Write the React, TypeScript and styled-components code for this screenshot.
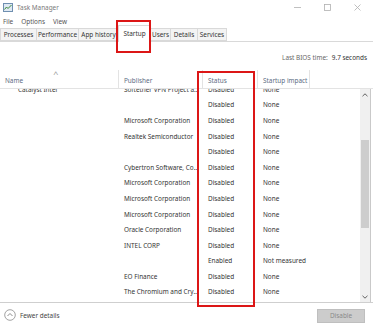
import React from 'react';
import styled, { createGlobalStyle } from 'styled-components';

const GlobalStyle = createGlobalStyle`
  html, body {
    margin: 0;
    padding: 0;
    background: #fff;
  }
  body {
    font-family: 'Noto Sans', 'Liberation Sans', sans-serif;
    color: #333;
  }
`;

//Styled Components

const Window = styled.div`
  position: relative;
  width: 373px;
  height: 327px;
  overflow: hidden;
  display: flex;
  flex-direction: column;
  background: #fff;
  font-size: 6.4px;
`;

const TitleBar = styled.div`
  height: 15px;
  display: flex;
  align-items: center;
  padding: 0 3px;
  gap: 4px;
  color: #7a7a7a;
`;
const Title = styled.span`
  flex: 1;
`;
const WinButton = styled.span`
  width: 26px;
  display: flex;
  justify-content: center;
  align-items: center;
`;

const MenuBar = styled.div`
  height: 12px;
  display: flex;
  align-items: center;
  gap: 8px;
  padding: 0 3px;
  color: #555;
`;

const TabBar = styled.div`
  height: 15px;
  display: flex;
  align-items: flex-end;
  border-bottom: 1px solid #d9d9d9;
  box-sizing: border-box;
`;
const Tab = styled.div<{ $active?: boolean; $w: number }>`
  width: ${(p) => p.$w}px;
  height: ${(p) => (p.$active ? 17 : 13)}px;
  box-sizing: border-box;
  display: flex;
  align-items: ${(p) => (p.$active ? 'flex-start' : 'center')};
  padding-top: ${(p) => (p.$active ? 3 : 0)}px;
  justify-content: center;
  margin-bottom: ${(p) => (p.$active ? -1 : 0)}px;
  background: ${(p) => (p.$active ? '#fff' : '#f3f3f3')};
  border: 1px solid #d9d9d9;
  border-bottom: ${(p) => (p.$active ? 'none' : '1px solid #d9d9d9')};
  margin-right: -1px;
  color: #333;
  white-space: nowrap;
`;

const InfoRow = styled.div`
  height: 28px;
  display: flex;
  justify-content: flex-end;
  align-items: center;
  padding: 3px 6px 0 0;
  box-sizing: border-box;
  color: #666;
  gap: 4px;
`;
const InfoValue = styled.span`
  color: #333;
`;

const Table = styled.div`
  flex: 1;
  display: flex;
  flex-direction: column;
  min-height: 0;
`;

const HeaderRow = styled.div`
  height: 19px;
  display: grid;
  grid-template-columns: 119px 84px 55px 52px 1fr;
  border-bottom: 1px solid #e3e3e3;
  box-sizing: border-box;
`;
const HeaderCell = styled.div<{ $last?: boolean }>`
  position: relative;
  display: flex;
  align-items: center;
  padding: 2px 0 0 ${(p) => (p.$last ? 0 : 5)}px;
  color: #5b6b82;
  white-space: nowrap;
  border-right: ${(p) => (p.$last ? 'none' : '1px solid #e3e3e3')};
`;
const SortCaret = styled.span`
  position: absolute;
  left: 54px;
  top: 0;
  color: #999;
  transform: scaleX(1.4);
`;

const Body = styled.div`
  height: 213px;
  display: flex;
  overflow: hidden;
`;
const Rows = styled.div`
  flex: 1;
  overflow: hidden;
`;
const RowList = styled.div`
  margin-top: -7.4px;
`;
const Row = styled.div`
  height: 15.58px;
  display: grid;
  grid-template-columns: 119px 84px 55px 52px 1fr;
  align-items: center;
  color: #333;
`;
const Cell = styled.div<{ $pad?: number }>`
  padding-left: ${(p) => p.$pad ?? 5}px;
  padding-right: 3px;
  white-space: nowrap;
  overflow: hidden;
  text-overflow: ellipsis;
`;

const ScrollBar = styled.div`
  width: 10px;
  margin-right: 2px;
  background: #f0f0f0;
  border-right: 1px solid #c9c9c9;
  display: flex;
  flex-direction: column;
  align-items: center;
`;
const ScrollArrow = styled.div`
  height: 11px;
  display: flex;
  align-items: center;
  justify-content: center;
`;
const ScrollTrack = styled.div`
  flex: 1;
  width: 100%;
  padding: 40px 0 63px;
  box-sizing: border-box;
  display: flex;
`;
const Thumb = styled.div`
  flex: 1;
  margin: 0 1px;
  background: #cdcdcd;
`;

const Footer = styled.div`
  height: 25px;
  border-top: 1px solid #cfcfcf;
  display: flex;
  align-items: center;
  padding: 0 8px 0 4px;
  box-sizing: border-box;
  gap: 4px;
  color: #444;
`;
const FooterLabel = styled.span`
  flex: 1;
`;
const DisableButton = styled.button`
  width: 48px;
  height: 14px;
  margin-top: 1px;
  padding: 0;
  border: 1px solid #bfbfbf;
  background: #cccccc;
  color: #8a8a8a;
  font-family: inherit;
  font-size: inherit;
`;

const RedBox = styled.div<{ $l: number; $t: number; $w: number; $h: number }>`
  position: absolute;
  left: ${(p) => p.$l}px;
  top: ${(p) => p.$t}px;
  width: ${(p) => p.$w}px;
  height: ${(p) => p.$h}px;
  border: 2px solid #dc1616;
  box-sizing: border-box;
  pointer-events: none;
`;

type StartupItem = {
  name: string;
  publisher: string;
  status: string;
  impact: string;
};

const tabs: [string, number][] = [
  ['Processes', 37],
  ['Performance', 43],
  ['App history', 41],
  ['Startup', 33],
  ['Users', 21],
  ['Details', 28],
  ['Services', 30],
];

const items: StartupItem[] = [
  { name: 'Catalyst Intel', publisher: 'Softether VPN Project at University of Tsukuba', status: 'Disabled', impact: 'None' },
  { name: '', publisher: '', status: 'Disabled', impact: 'None' },
  { name: '', publisher: 'Microsoft Corporation', status: 'Disabled', impact: 'None' },
  { name: '', publisher: 'Realtek Semiconductor', status: 'Disabled', impact: 'None' },
  { name: '', publisher: '', status: 'Disabled', impact: 'None' },
  { name: '', publisher: 'Cybertron Software, Co., Ltd.', status: 'Disabled', impact: 'None' },
  { name: '', publisher: 'Microsoft Corporation', status: 'Disabled', impact: 'None' },
  { name: '', publisher: 'Microsoft Corporation', status: 'Disabled', impact: 'None' },
  { name: '', publisher: 'Microsoft Corporation', status: 'Disabled', impact: 'None' },
  { name: '', publisher: 'Oracle Corporation', status: 'Disabled', impact: 'None' },
  { name: '', publisher: 'INTEL CORP', status: 'Disabled', impact: 'None' },
  { name: '', publisher: '', status: 'Enabled', impact: 'Not measured' },
  { name: '', publisher: 'EO Finance', status: 'Disabled', impact: 'None' },
  { name: '', publisher: 'The Chromium and Crypto Authors', status: 'Disabled', impact: 'None' },
];

const AppIcon = () => (
  <svg width='10' height='9' viewBox='0 0 10 9'>
    <rect x='0.5' y='0.5' width='9' height='8' fill='#dfe9f3' stroke='#6f8fb0' />
    <polyline points='1.5,6.5 3.5,4 5,5.5 8.5,2' fill='none' stroke='#3a8a3a' strokeWidth='1' />
  </svg>
);

const Chevron = ({ down }: { down?: boolean }) => (
  <svg width='6' height='4' viewBox='0 0 6 4'>
    <polyline
      points={down ? '0.5,0.8 3,3.2 5.5,0.8' : '0.5,3.2 3,0.8 5.5,3.2'}
      fill='none'
      stroke='#606060'
      strokeWidth='1'
    />
  </svg>
);

const CircleUp = () => (
  <svg width='12' height='12' viewBox='0 0 12 12'>
    <circle cx='6' cy='6' r='5.3' fill='none' stroke='#8a8a8a' strokeWidth='0.8' />
    <polyline points='3.5,7 6,4.5 8.5,7' fill='none' stroke='#707070' strokeWidth='0.8' />
  </svg>
);

const App: React.FC = () => {
  return (
    <>
      <GlobalStyle />
      <Window>
        <TitleBar>
          <AppIcon />
          <Title>Task Manager</Title>
          <WinButton>
            <svg width='7' height='7' viewBox='0 0 7 7'>
              <line x1='0' y1='3.5' x2='7' y2='3.5' stroke='#b0b0b0' strokeWidth='0.8' />
            </svg>
          </WinButton>
          <WinButton>
            <svg width='7' height='7' viewBox='0 0 7 7'>
              <rect x='0.5' y='0.5' width='6' height='6' fill='none' stroke='#b0b0b0' strokeWidth='0.8' />
            </svg>
          </WinButton>
          <WinButton>
            <svg width='7' height='7' viewBox='0 0 7 7'>
              <path d='M0.5 0.5 L6.5 6.5 M6.5 0.5 L0.5 6.5' stroke='#b0b0b0' strokeWidth='0.8' />
            </svg>
          </WinButton>
        </TitleBar>
        <MenuBar>
          <span>File</span>
          <span>Options</span>
          <span>View</span>
        </MenuBar>
        <TabBar>
          {tabs.map(([label, w]) => (
            <Tab key={label} $w={w} $active={label === 'Startup'}>
              {label}
            </Tab>
          ))}
        </TabBar>
        <InfoRow>
          <span>Last BIOS time:</span>
          <InfoValue>9.7 seconds</InfoValue>
        </InfoRow>
        <Table>
          <HeaderRow>
            <HeaderCell>
              Name
              <SortCaret>^</SortCaret>
            </HeaderCell>
            <HeaderCell>Publisher</HeaderCell>
            <HeaderCell>Status</HeaderCell>
            <HeaderCell>Startup impact</HeaderCell>
            <HeaderCell $last />
          </HeaderRow>
          <Body>
            <Rows>
              <RowList>
                {items.map((item, index) => (
                  <Row key={index}>
                    <Cell $pad={18}>{item.name}</Cell>
                    <Cell>{item.publisher}</Cell>
                    <Cell>{item.status}</Cell>
                    <Cell>{item.impact}</Cell>
                    <Cell />
                  </Row>
                ))}
              </RowList>
            </Rows>
            <ScrollBar>
              <ScrollArrow>
                <Chevron />
              </ScrollArrow>
              <ScrollTrack>
                <Thumb />
              </ScrollTrack>
              <ScrollArrow>
                <Chevron down />
              </ScrollArrow>
            </ScrollBar>
          </Body>
          <Footer>
            <CircleUp />
            <FooterLabel>Fewer details</FooterLabel>
            <DisableButton disabled>Disable</DisableButton>
          </Footer>
        </Table>
        <RedBox $l={116} $t={20} $w={35} $h={33} />
        <RedBox $l={197} $t={71} $w={58} $h={236} />
      </Window>
    </>
  );
};

export default App;
